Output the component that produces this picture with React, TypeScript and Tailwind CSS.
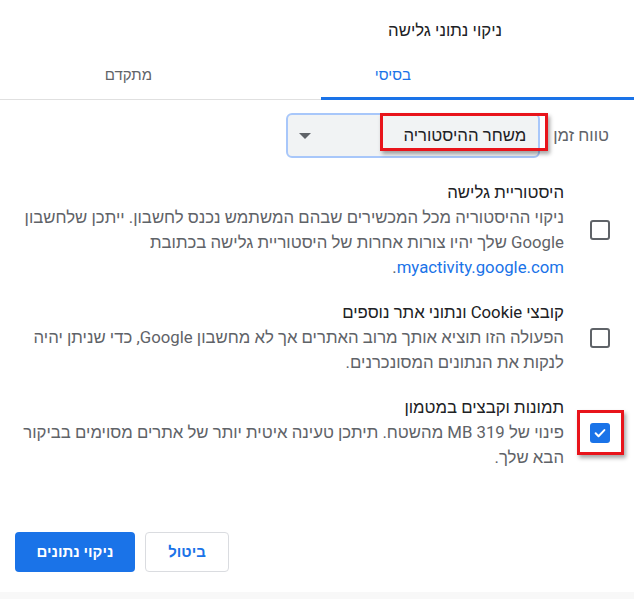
import React from "react";

function Box({ checked }: { checked?: boolean }) {
  if (checked) {
    return (
      <div className="w-[20px] h-[20px] rounded-[3px] bg-[#1a73e8] flex items-center justify-center shrink-0">
        <svg width="14" height="14" viewBox="0 0 24 24" fill="none">
          <path d="M4.5 12.5l5 5 10-10.5" stroke="white" strokeWidth="3.4" strokeLinecap="round" strokeLinejoin="round" />
        </svg>
      </div>
    );
  }
  return <div className="w-[20px] h-[20px] rounded-[3px] border-[2.5px] border-[#5f6368] shrink-0" />;
}

function Section({ title, lines, checked, link }: { title: string; lines: string[]; checked?: boolean; link?: string }) {
  return (
    <div className="flex items-center pr-[24px] pl-[16px] gap-[26px]">
      <Box checked={checked} />
      <div className="flex-1 text-[16.75px] leading-[25px]">
        <div className="text-[#202124]">{title}</div>
        {lines.map((l) => (
          <div key={l} className="text-[#5f6368] whitespace-nowrap">{l}</div>
        ))}
        {link && (
          <div className="text-[#5f6368]">
            <span className="text-[#1a73e8]">{link}</span>.
          </div>
        )}
      </div>
    </div>
  );
}

export default function App() {
  return (
    <div dir="rtl" className="relative w-[634px] h-[599px] bg-white flex flex-col font-['Roboto','Liberation_Sans',sans-serif]">
      <div className="h-[62px] flex items-center pr-[132px] text-[16.75px] text-[#202124]">ניקוי נתוני גלישה</div>

      <div className="flex h-[38px]">
        <div className="w-[313px] border-b-[3px] border-[#1a73e8] pr-[223px] pt-[3px] text-[15px] leading-[20px] font-medium text-[#1a73e8]">
          בסיסי
        </div>
        <div className="flex-1 border-b border-[#e0e0e0] pr-[169px] pt-[3px] text-[15px] leading-[20px] font-medium text-[#5f6368]">
          מתקדם
        </div>
      </div>

      <div className="mt-[13px] flex items-center h-[45px] pr-[25px] gap-[13px]">
        <span className="text-[16.75px] text-[#5f6368]">טווח זמן</span>
        <div className="w-[254px] h-[45px] rounded-[6px] border-2 border-[#a8c7fa] bg-[#f1f3f4] flex items-center justify-between pr-[12px] pl-[11px]">
          <span className="text-[16.75px] text-[#202124]">משחר ההיסטוריה</span>
          <svg width="12" height="6" viewBox="0 0 12 6">
            <path d="M0 0h12L6 6z" fill="#5f6368" />
          </svg>
        </div>
      </div>

      <div className="mt-[22px] flex flex-col gap-[20px]">
        <Section
          title="היסטוריית גלישה"
          lines={[
            "ניקוי ההיסטוריה מכל המכשירים שבהם המשתמש נכנס לחשבון. ייתכן שלחשבון",
            "Google שלך יהיו צורות אחרות של היסטוריית גלישה בכתובת",
          ]}
          link="myactivity.google.com"
        />
        <Section
          title="קובצי Cookie ונתוני אתר נוספים"
          lines={[
            "הפעולה הזו תוציא אותך מרוב האתרים אך לא מחשבון Google, כדי שניתן יהיה",
            "לנקות את הנתונים המסונכרנים.",
          ]}
        />
        <Section
          title="תמונות וקבצים במטמון"
          lines={[
            "פינוי של 319 MB מהשטח. תיתכן טעינה איטית יותר של אתרים מסוימים בביקור",
            "הבא שלך.",
          ]}
          checked
        />
      </div>

      <div className="mt-auto mb-[20px] flex justify-end gap-[10px] pl-[15px]">
        <button className="w-[84px] h-[40px] rounded-[4px] border border-[#dadce0] bg-white text-[15px] font-bold text-[#1a73e8]">
          ביטול
        </button>
        <button className="w-[120px] h-[40px] rounded-[4px] bg-[#1a73e8] text-[15px] font-bold text-white">
          ניקוי נתונים
        </button>
      </div>

      <div className="h-[7px] bg-[#f8f8f8]" />

      <div className="absolute left-[380px] top-[113px] w-[168px] h-[38px] border-[3px] border-[#e8141b] shadow-[2px_3px_4px_rgba(0,0,0,0.35)]" />
      <div className="absolute left-[577px] top-[410px] w-[47px] h-[45px] border-[3px] border-[#e8141b] shadow-[2px_3px_4px_rgba(0,0,0,0.35)]" />
    </div>
  );
}
